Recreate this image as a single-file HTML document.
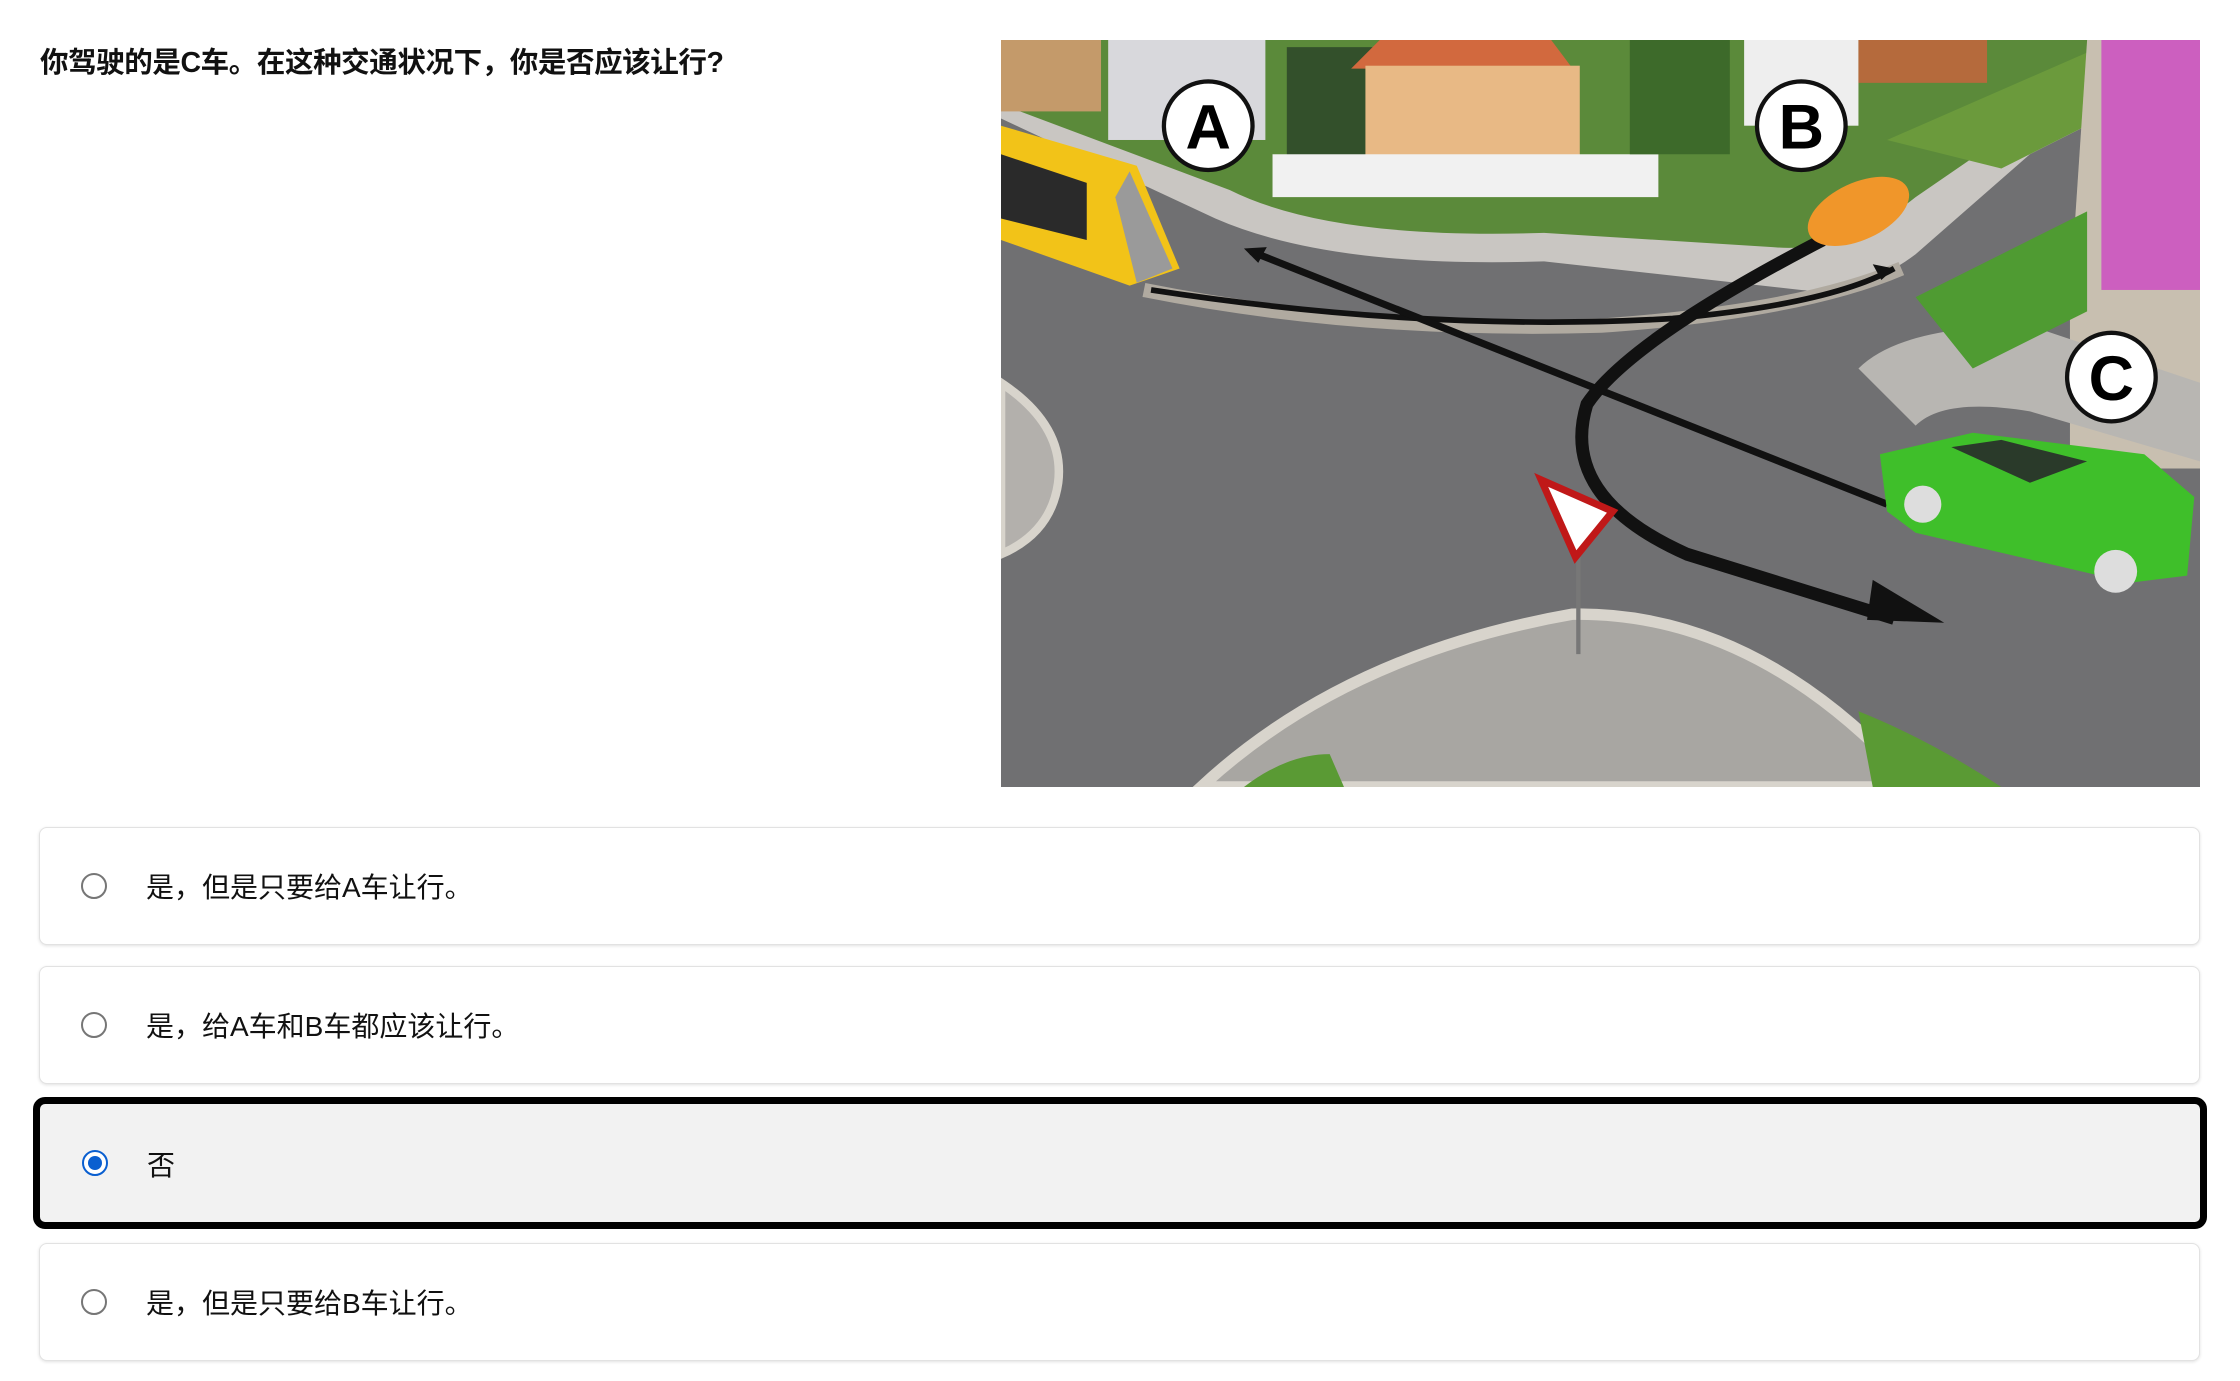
<!DOCTYPE html>
<html><head><meta charset="utf-8"><style>
html,body{margin:0;padding:0;background:#fff;width:2240px;height:1381px;overflow:hidden;font-family:"Liberation Sans","Noto Sans CJK SC",sans-serif;}
.title{position:absolute;left:40px;top:40px;font-size:28.5px;font-weight:bold;color:#111;letter-spacing:-0.4px;}
.img{position:absolute;left:1001px;top:40px;width:1199px;height:747px;}
.opt{position:absolute;left:39px;width:2161px;height:118px;border:1px solid #e2e2e2;border-radius:8px;background:#fff;box-shadow:0 1px 3px rgba(0,0,0,0.12);box-sizing:border-box;}
.opt .r{position:absolute;left:41px;top:45px;width:26px;height:26px;border-radius:50%;border:2px solid #767676;box-sizing:border-box;background:#fff;}
.opt .t{position:absolute;left:106px;top:40px;font-size:28px;color:#111;line-height:40px;}
.sel{left:33px;width:2174px;height:132px;border:7px solid #000;border-radius:12px;background:#f2f2f2;box-shadow:none;}
.sel .r{left:42px;top:46px;border:2px solid #0a5fd0;}
.sel .r:after{content:"";position:absolute;left:4px;top:4px;width:14px;height:14px;border-radius:50%;background:#0a5fd0;}
.sel .t{left:107px;top:42px;}
</style></head><body>
<div class="title">你驾驶的是C车。在这种交通状况下，你是否应该让行?</div>
<svg class="img" viewBox="0 0 839 523" preserveAspectRatio="none">
<rect width="839" height="523" fill="#707072"/>
<path d="M0 0H839V20L720 80L640 150Q600 180 560 175L380 155Q230 160 150 125L0 55Z" fill="#c9c6c2"/>
<path d="M0 0H800L640 110Q590 150 540 145L380 135Q230 140 160 105L0 45Z" fill="#5b8a3a"/>
<rect x="0" y="0" width="70" height="50" fill="#c49a6a"/>
<rect x="75" y="0" width="110" height="70" fill="#d8d8dc"/>
<rect x="200" y="5" width="60" height="90" fill="#33502b"/>
<path d="M245 20L265 0H385L400 20Z" fill="#d2693e"/>
<rect x="255" y="18" width="150" height="90" fill="#e8b985"/>
<rect x="190" y="80" width="270" height="30" fill="#f1f1f1"/>
<rect x="440" y="0" width="70" height="80" fill="#3d6a2a"/>
<rect x="520" y="0" width="80" height="60" fill="#eeeeee"/>
<rect x="600" y="0" width="90" height="30" fill="#b56a3c"/>
<path d="M620 70L780 0H839V20L700 90Z" fill="#6b9a3c"/>
<path d="M760 0H839V300H748V180Z" fill="#c8bfb0"/>
<rect x="770" y="0" width="69" height="175" fill="#cc5fbf"/>
<path d="M600 230Q630 200 720 200L839 240V295L720 260Q660 250 640 270Z" fill="#b8b6b2"/>
<path d="M640 180L760 120V190L680 230Z" fill="#4f9b32"/>
<path d="M0 60L95 88L125 160L90 172L0 140Z" fill="#f2c318"/>
<path d="M90 92L120 160L95 170L80 110Z" fill="#9a9a9a"/>
<path d="M0 80L60 100L60 140L0 125Z" fill="#2a2a2a"/>
<path d="M100 175Q250 205 420 200Q560 190 630 160" stroke="#b0aaa0" stroke-width="10" fill="none"/>
<path d="M0 240Q45 270 40 310Q35 345 0 360Z" fill="#b3b0ac" stroke="#d8d4cc" stroke-width="6"/>
<path d="M140 523Q240 430 400 402Q530 400 640 523Z" fill="#a8a6a2" stroke="#d8d4cc" stroke-width="8"/>
<path d="M170 523Q200 500 230 500L240 523Z" fill="#5a9a34"/>
<path d="M600 470Q650 490 700 523H610Z" fill="#5a9a34"/>
<path d="M105 175Q300 205 470 195Q580 185 625 160" stroke="#111" stroke-width="4" fill="none"/>
<path d="M625 160L610 157L616 168Z" fill="#111"/>
<path d="M175 148L620 325" stroke="#111" stroke-width="5" fill="none"/>
<path d="M170 146L186 145L180 156Z" fill="#111"/>
<path d="M575 140Q440 210 410 255Q390 320 480 360L625 405" stroke="#111" stroke-width="9" fill="none"/>
<path d="M610 378L660 408L606 406Z" fill="#111"/>
<ellipse cx="600" cy="120" rx="38" ry="20" fill="#f0962a" transform="rotate(-25 600 120)"/>
<path d="M615 290L680 275L800 290L835 320L830 375L790 380L640 345L620 330Z" fill="#3fbf2a"/>
<circle cx="645" cy="325" r="13" fill="#ddd"/><circle cx="780" cy="372" r="15" fill="#ddd"/>
<path d="M665 285L700 280L760 295L720 310Z" fill="#2a3a2a"/>
<line x1="404" y1="360" x2="404" y2="430" stroke="#777" stroke-width="3"/>
<path d="M378 308L428 330L402 362Z" fill="#fff" stroke="#c01818" stroke-width="5"/>
<g font-family="Liberation Sans,sans-serif" font-weight="bold" font-size="44" text-anchor="middle">
<circle cx="145" cy="60" r="31" fill="#fff" stroke="#111" stroke-width="3"/><text x="145" y="76">A</text>
<circle cx="560" cy="60" r="31" fill="#fff" stroke="#111" stroke-width="3"/><text x="560" y="76">B</text>
<circle cx="777" cy="236" r="31" fill="#fff" stroke="#111" stroke-width="3"/><text x="777" y="252">C</text>
</g>
</svg>
<div class="opt" style="top:827px"><div class="r"></div><div class="t">是，但是只要给A车让行。</div></div>
<div class="opt" style="top:966px"><div class="r"></div><div class="t">是，给A车和B车都应该让行。</div></div>
<div class="opt sel" style="top:1097px"><div class="r"></div><div class="t">否</div></div>
<div class="opt" style="top:1243px"><div class="r"></div><div class="t">是，但是只要给B车让行。</div></div>
</body></html>
